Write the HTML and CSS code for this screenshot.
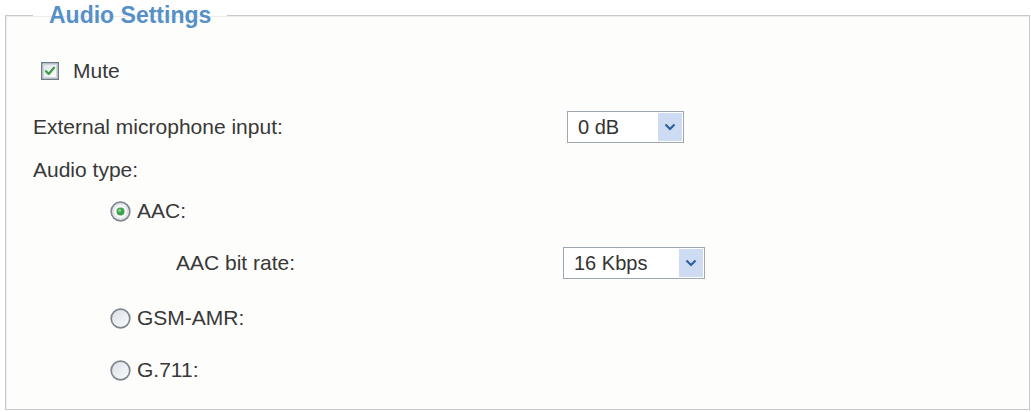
FILE: index.html
```html
<!DOCTYPE html>
<html lang="en">
<head>
  <meta charset="UTF-8" />
  <title>Audio Settings</title>
  <link rel="stylesheet" href="styles.css">
</head>
<body>

  <fieldset class="settings">
    <legend>Audio Settings</legend>

    <div class="row row-mute">
      <span class="check">
        <svg width="18" height="18" viewBox="0 0 18 18">
          <defs>
            <linearGradient id="cbg" x1="0" y1="0" x2="1" y2="1">
              <stop offset="0" stop-color="#dfe4ea"/>
              <stop offset="1" stop-color="#fbfcfd"/>
            </linearGradient>
          </defs>
          <rect x="0.75" y="0.75" width="16.5" height="16.5" fill="#fff" stroke="#6f7c86" stroke-width="1.5"/>
          <rect x="2.5" y="2.5" width="13" height="13" fill="url(#cbg)" stroke="#c4ccd6" stroke-width="0.8"/>
          <path d="M5 9.2 L7.7 11.9 L13 5.8" fill="none" stroke="#3ca043" stroke-width="2.3" stroke-linecap="round" stroke-linejoin="round"/>
        </svg>
      </span>
      <span class="text">Mute</span>
    </div>

    <div class="row row-ext">
      <span class="label label-wide">External microphone input:</span>
      <div class="select select-db">
        <span class="value">0 dB</span>
        <span class="arrow"><svg width="12" height="8" viewBox="0 0 12 8"><path d="M1.5 1.5 L6 6 L10.5 1.5" fill="none" stroke="#2f5f9f" stroke-width="2.2"/></svg></span>
      </div>
    </div>

    <div class="row row-type">
      <span class="label">Audio type:</span>
    </div>

    <div class="row row-aac">
      <span class="radio">
        <svg width="21" height="21" viewBox="0 0 21 21">
          <circle cx="10.5" cy="10.5" r="9.3" fill="#eef1f4" stroke="#7f868e" stroke-width="1.7"/>
          <circle cx="10.5" cy="10.5" r="7" fill="#fbfcfd" stroke="#d6dbe1" stroke-width="1"/>
          <circle cx="10.5" cy="10.5" r="4" fill="#3fa34a"/>
          <circle cx="9.6" cy="9.4" r="1.6" fill="#86cf8a"/>
        </svg>
      </span>
      <span class="text">AAC:</span>
    </div>

    <div class="row row-rate">
      <span class="label label-rate">AAC bit rate:</span>
      <div class="select select-rate">
        <span class="value">16 Kbps</span>
        <span class="arrow"><svg width="12" height="8" viewBox="0 0 12 8"><path d="M1.5 1.5 L6 6 L10.5 1.5" fill="none" stroke="#2f5f9f" stroke-width="2.2"/></svg></span>
      </div>
    </div>

    <div class="row row-gsm">
      <span class="radio">
        <svg width="21" height="21" viewBox="0 0 21 21">
          <defs>
            <linearGradient id="rbg" x1="0" y1="0" x2="1" y2="1">
              <stop offset="0" stop-color="#d9dfe6"/>
              <stop offset="1" stop-color="#fbfcfd"/>
            </linearGradient>
          </defs>
          <circle cx="10.5" cy="10.5" r="9.3" fill="url(#rbg)" stroke="#7f868e" stroke-width="1.7"/>
        </svg>
      </span>
      <span class="text">GSM-AMR:</span>
    </div>

    <div class="row row-g711">
      <span class="radio">
        <svg width="21" height="21" viewBox="0 0 21 21">
          <circle cx="10.5" cy="10.5" r="9.3" fill="url(#rbg)" stroke="#7f868e" stroke-width="1.7"/>
        </svg>
      </span>
      <span class="text">G.711:</span>
    </div>
  </fieldset>

</body>
</html>
```

FILE: styles.css
```css
* {
  box-sizing: border-box;
}

html, body {
  margin: 0;
  background: #fff;
}

body {
  padding: 2px 1px 0 5px;
  font-family: "Liberation Sans", Arial, sans-serif;
  font-size: 21px;
  color: #383838;
}

.settings {
  margin: 0;
  height: 408px;
  padding: 0 0 0 27px;
  border: 1px solid #c9c9c9;
  box-shadow: inset 1px 1px 0 #ececec;
  background: #fdfdfb;
}

.settings legend {
  padding: 0 16px;
  font-size: 23px;
  font-weight: bold;
  line-height: 27px;
  color: #5590c9;
}

.row {
  display: flex;
  align-items: center;
  height: 30px;
}

.row-mute { margin-top: 27px; }
.row-ext { margin-top: 25px; height: 32px; }
.row-type { margin-top: 12px; }
.row-aac { margin-top: 11px; }
.row-rate { margin-top: 21px; height: 32px; }
.row-gsm { margin-top: 24px; }
.row-g711 { margin-top: 22px; }

.check {
  display: flex;
  margin-left: 8px;
  margin-right: 14px;
}

.radio {
  display: flex;
  margin-left: 77px;
  margin-right: 6px;
}

.label-wide {
  width: 534px;
}

.label-rate {
  margin-left: 143px;
  width: 387px;
}

.select {
  display: flex;
  align-items: stretch;
  height: 32px;
  border: 1px solid #9ea6b0;
  background: #fff;
  font-size: 20px;
  color: #333;
}

.select-db { width: 117px; }
.select-rate { width: 142px; }

.select .value {
  flex: 1;
  display: flex;
  align-items: center;
  padding-left: 10px;
}

.select .arrow {
  width: 24px;
  margin: 1px;
  display: flex;
  align-items: center;
  justify-content: center;
  background: #cddcf3;
}
```
